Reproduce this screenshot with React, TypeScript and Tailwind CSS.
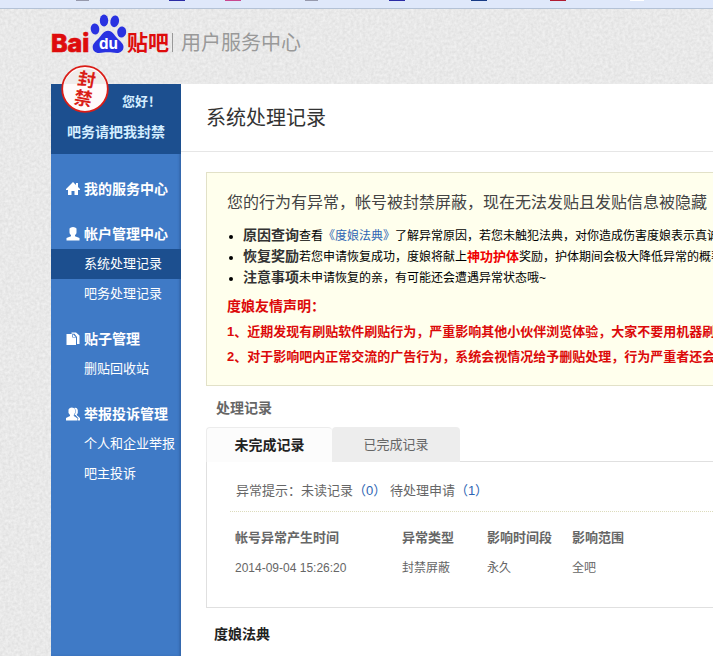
import { useState, type ReactNode } from "react";
import clsx from "clsx";

const menu = [
  { title: "我的服务中心", icon: <HomeIcon />, items: [] },
  { title: "帐户管理中心", icon: <UserIcon />, items: ["系统处理记录", "吧务处理记录"] },
  { title: "贴子管理", icon: <PostsIcon />, items: ["删贴回收站"] },
  { title: "举报投诉管理", icon: <ReportIcon />, items: ["个人和企业举报", "吧主投诉"] },
];

const records = [
  { time: "2014-09-04 15:26:20", type: "封禁屏蔽", period: "永久", scope: "全吧" },
];

function HomeIcon() {
  return (
    <svg viewBox="0 0 14 14" className="size-3.5 fill-current" aria-hidden>
      <path d="M7 0 0 7v1h2v5h3.500V9h3v4H12V8h2V7l-2-2V1h-2v2Z" />
    </svg>
  );
}

function UserIcon() {
  return (
    <svg viewBox="0 0 14 14" className="size-3.5 fill-current" aria-hidden>
      <path d="M3.500 1.500Q4.500 0 7 0t3.500 1.500v4Q10.500 7 9 8v1.300L13.500 11v2.500H.5V11L5 9.300V8Q3.500 7 3.500 5.500Z" />
    </svg>
  );
}

function PostsIcon() {
  return (
    <svg viewBox="0 0 14 14" className="size-3.5 fill-current" aria-hidden>
      <path d="M.5 2h5.800v3.500H10V13H.5Z" />
      <path d="M7 2.200 9.700 5H7ZM5.500.5H10l3.500 3V12H11V5L8.500 1.800h-3Z" />
    </svg>
  );
}

function ReportIcon() {
  return (
    <svg viewBox="0 0 14 14" className="size-3.5 fill-current" aria-hidden>
      <path d="M2.500 2.500Q3.500.5 5.800.5T9 2.500v3.300L7.800 8v1l3.200 2v2.500H0V11l4-2V8L2.500 6Z" />
      <path d="M8 1Q11-.3 11.800 3v3l-1.200 2L14 11v2.500h-2.500V11L8.500 8l1-2V2.500Z" />
      <path d="m9 8 3 3.500" className="stroke-[#3f7ac6]" />
    </svg>
  );
}

function Logo() {
  return (
    <svg viewBox="0 0 120 42" className="h-[42px] w-[120px] overflow-visible" role="img" aria-label="Baidu 贴吧">
      <text
        x="0"
        y="37.500"
        fontSize="25"
        fontWeight="800"
        fill="#de0c0c"
        stroke="#de0c0c"
        strokeWidth="0.700"
        fontFamily="Inter, sans-serif"
      >
        Bai
      </text>
      <g fill="#2932e1">
        <ellipse cx="44" cy="15" rx="4.300" ry="5.600" transform="rotate(-10 44 15)" />
        <ellipse cx="53" cy="6.500" rx="4.200" ry="5.900" />
        <ellipse cx="63.700" cy="7.300" rx="4.300" ry="5.900" transform="rotate(12 63.700 7.300)" />
        <ellipse cx="70.700" cy="18" rx="4.500" ry="5.500" transform="rotate(8 70.700 18)" />
        <path d="M57 16.800c4.500 0 6 4 9 7.200s6.500 5.500 6.500 9-3 6-6.500 6c-3.500 0-5.500-.7-9-.7s-5.500.7-9 .7c-4 0-6.300-2.500-6.300-6s3.300-5.800 6.300-9 4.500-7.200 9-7.200Z" />
      </g>
      <text x="48" y="35" fontSize="15" fontWeight="700" fill="#fff" fontFamily="Inter, sans-serif">
        du
      </text>
      <text x="76" y="36" fontSize="21" fontWeight="700" fill="#de0c0c" fontFamily="'Noto Sans CJK SC', sans-serif">
        贴吧
      </text>
    </svg>
  );
}

function BanStamp() {
  return (
    <svg
      viewBox="0 0 48 48"
      className="absolute -top-[19px] left-2.5 size-12 overflow-visible"
      role="img"
      aria-label="封禁"
    >
      <circle cx="24" cy="24" r="22.800" fill="#fffafa" />
      <path d="M3 19A22 22 0 0 1 45 19Z" fill="#f0ecea" />
      <circle cx="24" cy="24" r="22.800" fill="none" stroke="#da1d17" strokeWidth="1.800" />
      <g
        fill="#da1d17"
        fontSize="18"
        fontWeight="700"
        textAnchor="middle"
        fontFamily="'Noto Sans CJK SC', sans-serif"
        transform="rotate(10 24 24)"
      >
        <text x="24" y="21">封</text>
        <text x="24" y="40">禁</text>
      </g>
    </svg>
  );
}

function PaperTexture() {
  return (
    <svg className="absolute inset-0 size-full" aria-hidden>
      <filter id="grain" x="0" y="0" width="100%" height="100%" colorInterpolationFilters="sRGB">
        <feTurbulence type="fractalNoise" baseFrequency="0.35" numOctaves="2" seed="4" />
        <feColorMatrix values="0.1 0 0 0 0.862  0.1 0 0 0 0.862  0.1 0 0 0 0.862  0 0 0 0 1" />
      </filter>
      <rect width="100%" height="100%" filter="url(#grain)" />
    </svg>
  );
}

function BookmarksBar() {
  return (
    <div className="relative flex h-[9px] items-start overflow-hidden border-b border-[#b4c2d6] bg-[#dfe8fa] pl-[76px]">
      <i className="mr-20 h-px w-[13px] shrink-0 bg-[#9699ac]" />
      <i className="mr-10 h-px w-4 shrink-0 bg-[#2a2ba5]" />
      <i className="mr-16 h-px w-4 shrink-0 bg-[#c8478f]" />
      <i className="mr-[71px] h-px w-[13px] shrink-0 bg-[#9699ac]" />
      <i className="mr-[66px] h-px w-4 shrink-0 bg-[#2a2ba5]" />
      <i className="mr-[63px] h-px w-4 shrink-0 bg-[#173a85]" />
      <i className="mr-16 h-px w-4 shrink-0 bg-[#b01b31]" />
      <i className="h-px w-3.5 shrink-0 bg-white" />
    </div>
  );
}

function Sidebar() {
  return (
    <aside className="relative w-[130px] shrink-0 bg-[#3f7ac6] shadow-[inset_-2px_0_2px_#3569ae]">
      <div className="h-[70px] bg-[#1c4f8f] pt-2 font-bold text-[#d3edff]">
        <BanStamp />
        <p className="pl-[71px] text-[13px] leading-5">您好！</p>
        <p className="pt-2.5 pl-4 text-sm leading-5">吧务请把我封禁</p>
      </div>
      <nav className="flex flex-col gap-3.5 pt-[19px] text-white">
        {menu.map((group) => (
          <div key={group.title}>
            <a href="#" className="flex h-[31px] items-center gap-1 pl-[15px] text-sm leading-5 font-bold">
              {group.icon}
              {group.title}
            </a>
            {group.items.map((item) => (
              <a
                key={item}
                href="#"
                className={clsx(
                  "block h-[30px] pl-[33px] text-[13px] leading-[30px] whitespace-nowrap",
                  item === "系统处理记录" && "bg-[#1c4f8f]",
                )}
              >
                {item}
              </a>
            ))}
          </div>
        ))}
      </nav>
    </aside>
  );
}

function Notice() {
  return (
    <section className="overflow-hidden border-y border-l border-[#e2e1c8] bg-[#ffffed] pt-3.5 pb-4 pl-5 whitespace-nowrap">
      <h2 className="text-base leading-8 text-[#444]">
        您的行为有异常，帐号被封禁屏蔽，现在无法发贴且发贴信息被隐藏
      </h2>
      <ul className="mt-1.5 list-disc pl-4 text-xs leading-[21px] text-black">
        <li className="h-[21px]">
          <Label>原因查询</Label>查看
          <a href="#" className="text-[#2d64b3]">《度娘法典》</a>
          了解异常原因，若您未触犯法典，对你造成伤害度娘表示真诚
        </li>
        <li className="h-[21px]">
          <Label>恢复奖励</Label>若您申请恢复成功，度娘将献上
          <b className="text-[13px] text-[#f00000]">神功护体</b>
          奖励，护体期间会极大降低异常的概率
        </li>
        <li className="h-[21px]">
          <Label>注意事项</Label>未申请恢复的亲，有可能还会遭遇异常状态哦~
        </li>
      </ul>
      <div className="mt-1.5 text-[13px] leading-[25px] font-bold text-[#dc0a0a]">
        <h3 className="text-sm leading-[25px]">度娘友情声明：</h3>
        <p>1、近期发现有刷贴软件刷贴行为，严重影响其他小伙伴浏览体验，大家不要用机器刷</p>
        <p>2、对于影响吧内正常交流的广告行为，系统会视情况给予删贴处理，行为严重者还会</p>
      </div>
    </section>
  );
}

function Label({ children }: { children: ReactNode }) {
  return <b className="text-sm leading-[21px] text-[#333]">{children}</b>;
}

function Records() {
  const [tab, setTab] = useState(0);

  return (
    <section>
      <h2 className="h-[41px] pt-0.5 pl-2.5 text-sm leading-10 font-bold text-[#666]">处理记录</h2>
      <div role="tablist" className="relative -mb-px flex h-[35px]">
        {["未完成记录", "已完成记录"].map((name, i) => (
          <button
            key={name}
            type="button"
            role="tab"
            aria-selected={tab === i}
            onClick={() => setTab(i)}
            className={clsx(
              "rounded-t",
              i === 0 ? "w-[126px]" : "w-32",
              tab === i
                ? "border-t border-l border-[#ececec] bg-[#fcfcfc] text-sm font-bold text-[#222]"
                : "bg-[#ededed] text-[13px] text-[#666]",
            )}
          >
            {name}
          </button>
        ))}
      </div>
      <div className="border-y border-l border-[#e0e0e0] pb-6 pl-[23px] text-[#666]">
        <p className="border-b border-dotted border-[#dcdcbc] pt-3.5 pb-[5px] pl-1.5 text-[13px] leading-[30px] whitespace-nowrap">
          异常提示：未读记录<a href="#" className="text-[#2d64b3]">（0）</a>{" "}
          待处理申请<a href="#" className="text-[#2d64b3]">（1）</a>
        </p>
        <table className="mt-[11px] ml-[5px] w-full table-fixed text-left text-xs">
          <thead>
            <tr className="h-[30px] text-[13px] whitespace-nowrap">
              <th className="w-[167px]">帐号异常产生时间</th>
              <th className="w-[85px]">异常类型</th>
              <th className="w-[85px]">影响时间段</th>
              <th>影响范围</th>
            </tr>
          </thead>
          <tbody>
            {records.map((r) => (
              <tr key={r.time} className="h-[30px]">
                <td>{r.time}</td>
                <td>{r.type}</td>
                <td>{r.period}</td>
                <td>{r.scope}</td>
              </tr>
            ))}
          </tbody>
        </table>
      </div>
    </section>
  );
}

export default function App() {
  return (
    <div className="relative flex min-h-screen flex-col overflow-hidden bg-[#e9e9e9] font-['Liberation_Sans','Noto_Sans_CJK_SC',sans-serif]">
      <PaperTexture />
      <BookmarksBar />
      <header className="relative flex h-[75px] items-start pt-[5px] pl-[51px]">
        <Logo />
        <span className="mt-[19px] ml-px h-[19px] w-px bg-[#999]" />
        <h1 className="mt-3.5 ml-2 text-xl leading-[30px] text-[#999]">用户服务中心</h1>
      </header>
      <div className="relative flex flex-1 pl-[51px]">
        <Sidebar />
        <main className="min-w-0 flex-1 bg-white">
          <h2 className="border-b border-[#e6e6e6] pt-0.5 pl-[25px] text-xl leading-[65px] text-[#333]">系统处理记录</h2>
          <div className="pt-5 pl-[25px]">
            <Notice />
            <Records />
            <h2 className="pt-3 pb-1.5 pl-2 text-sm leading-7 font-bold text-[#222]">度娘法典</h2>
          </div>
        </main>
      </div>
    </div>
  );
}
